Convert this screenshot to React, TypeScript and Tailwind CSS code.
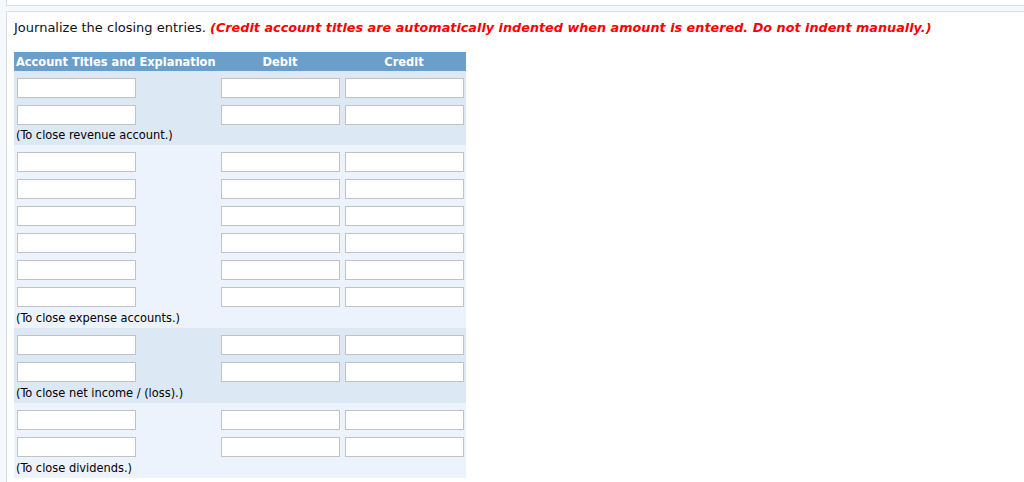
// App.tsx
const sections = [
  { rows: 2, note: "(To close revenue account.)", bg: "bg-[#dde8f5]", noteH: "h-[20px]" },
  { rows: 6, note: "(To close expense accounts.)", bg: "bg-[#edf3fc]", noteH: "h-[21px]" },
  { rows: 2, note: "(To close net income / (loss).)", bg: "bg-[#dde8f5]", noteH: "h-[21px]" },
  { rows: 2, note: "(To close dividends.)", bg: "bg-[#edf3fc]", noteH: "h-[21px]" },
];

function Field() {
  return (
    <input
      type="text"
      className="h-[20px] w-[119px] border border-[#c2c2c2] bg-white outline-none"
    />
  );
}

export default function App() {
  return (
    <div className="h-[482px] w-[1024px] overflow-hidden bg-[#f6f8fb]">
      {/* end of the box above */}
      <div className="ml-[6px] h-[6px] border-b border-l border-[#d5dde6] bg-white" />

      <div className="ml-[6px] mt-[5px] border-l border-t border-[#d5dde6] bg-white pl-[7px] pt-[8px] pb-[4px]">
        <p className="text-[13px] leading-[16px] text-[#111]" style={{ fontFamily: '"DejaVu Sans", Verdana, sans-serif' }}>
          Journalize the closing entries.{" "}
          <span className="text-[12.8px] font-bold italic text-[#f00]">
            (Credit account titles are automatically indented when amount is entered. Do not indent manually.)
          </span>
        </p>

        <div
          className="mt-[16px] w-[452px] text-[12.7px] text-black"
          style={{ fontFamily: '"DejaVu Sans Condensed", "DejaVu Sans", Tahoma, sans-serif', fontStretch: "condensed" }}
        >
          {/* header */}
          <div className="flex h-[19px] items-center bg-[#6b9fcb] font-bold text-white">
            <div className="w-[204px] pl-[2px]">Account Titles and Explanation</div>
            <div className="w-[124px] text-center">Debit</div>
            <div className="w-[124px] text-center">Credit</div>
          </div>

          {sections.map((s, i) => (
            <div key={i} className={s.bg}>
              {Array.from({ length: s.rows }).map((_, r) => (
                <div key={r} className="flex pt-[7px]">
                  <div className="w-[204px] pl-[3px]">
                    <Field />
                  </div>
                  <div className="w-[124px] pl-[3px]">
                    <Field />
                  </div>
                  <div className="w-[124px] pl-[3px]">
                    <Field />
                  </div>
                </div>
              ))}
              <div className={`flex items-center pl-[2px] ${s.noteH}`}>{s.note}</div>
            </div>
          ))}
        </div>
      </div>
    </div>
  );
}
